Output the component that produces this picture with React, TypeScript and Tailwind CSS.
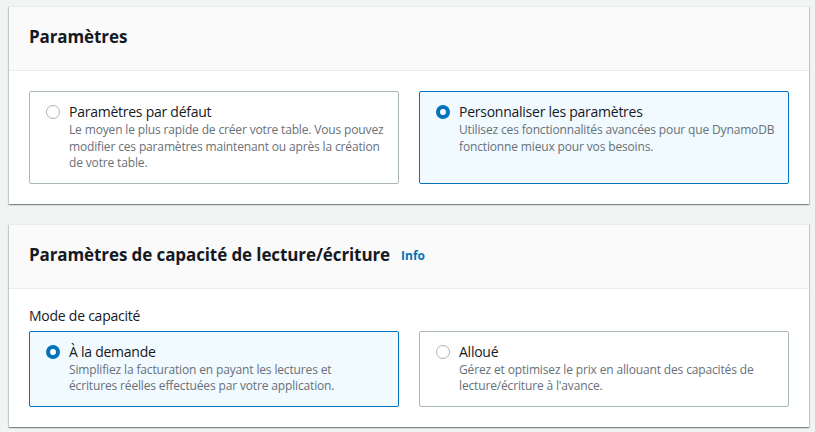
function Radio({ checked }: { checked: boolean }) {
  return checked ? (
    <span className="mt-[3px] box-border block h-[14px] w-[14px] shrink-0 rounded-full border-[4px] border-[#0073bb] bg-white" />
  ) : (
    <span className="mt-[3px] box-border block h-[14px] w-[14px] shrink-0 rounded-full border border-[#aab7b8] bg-white" />
  );
}

function Tile({
  checked,
  label,
  lines,
}: {
  checked: boolean;
  label: string;
  lines: string[];
}) {
  return (
    <div
      className={`rounded-[2px] border px-[16px] pb-[11px] pt-[10px] ${
        checked ? "border-[#0073bb] bg-[#f1faff]" : "border-[#aab7b8] bg-white"
      }`}
    >
      <div className="flex items-start gap-[9px]">
        <Radio checked={checked} />
        <div>
          <div className="text-[14px] leading-[20px] tracking-[-0.25px] text-[#16191f]">{label}</div>
          <div className="text-[12px] leading-[16.5px] tracking-[-0.15px] text-[#687078]">
            {lines.map((l) => (
              <div key={l} className="whitespace-nowrap">
                {l}
              </div>
            ))}
          </div>
        </div>
      </div>
    </div>
  );
}

function Card({
  title,
  info,
  children,
}: {
  title: string;
  info?: boolean;
  children: React.ReactNode;
}) {
  return (
    <section className="w-[800px] border-t border-[#eaeded] bg-white shadow-[0_1px_1px_0_rgba(0,28,36,0.3),1px_1px_1px_0_rgba(0,28,36,0.15),-1px_1px_1px_0_rgba(0,28,36,0.15)]">
      <div className="flex h-[64px] items-center gap-[11px] border-b border-[#eaeded] bg-[#fafafa] px-[20px] pb-[3px]">
        <h2 className="text-[17px] font-bold leading-[22px] tracking-[-0.1px] text-[#16191f]">
          {title}
        </h2>
        {info ? (
          <span className="pt-[2px] text-[12px] font-bold text-[#0073bb]">Info</span>
        ) : null}
      </div>
      {children}
    </section>
  );
}

export default function App() {
  return (
    <main
      className="flex min-h-[432px] flex-col gap-[20px] bg-[#f2f3f3] pl-[9px] pt-[6px]"
      style={{ fontFamily: '"Open Sans", "Noto Sans", sans-serif' }}
    >
      <Card title="Paramètres">
        <div className="grid grid-cols-2 gap-[20px] px-[20px] py-[20px]">
          <Tile
            checked={false}
            label="Paramètres par défaut"
            lines={[
              "Le moyen le plus rapide de créer votre table. Vous pouvez",
              "modifier ces paramètres maintenant ou après la création",
              "de votre table.",
            ]}
          />
          <Tile
            checked
            label="Personnaliser les paramètres"
            lines={[
              "Utilisez ces fonctionnalités avancées pour que DynamoDB",
              "fonctionne mieux pour vos besoins.",
            ]}
          />
        </div>
      </Card>

      <Card title="Paramètres de capacité de lecture/écriture" info>
        <div className="px-[20px] pb-[20px] pt-[17px]">
          <div className="mb-[5px] text-[14px] leading-[20px] tracking-[-0.25px] text-[#16191f]">
            Mode de capacité
          </div>
          <div className="grid grid-cols-2 gap-[20px]">
            <Tile
              checked
              label="À la demande"
              lines={[
                "Simplifiez la facturation en payant les lectures et",
                "écritures réelles effectuées par votre application.",
              ]}
            />
            <Tile
              checked={false}
              label="Alloué"
              lines={[
                "Gérez et optimisez le prix en allouant des capacités de",
                "lecture/écriture à l'avance.",
              ]}
            />
          </div>
        </div>
      </Card>
    </main>
  );
}
